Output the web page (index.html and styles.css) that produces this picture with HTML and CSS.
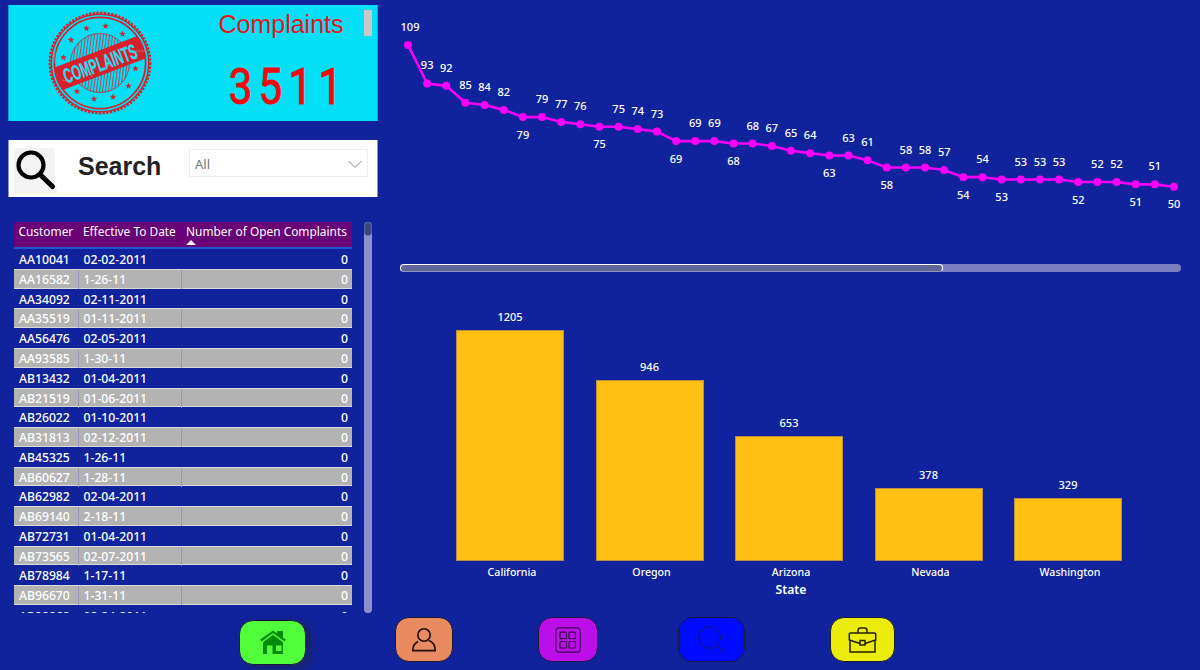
FILE: index.html
```html
<!DOCTYPE html>
<html lang="en">
<head>
<meta charset="utf-8">
<title>Complaints</title>
<link rel="stylesheet" href="styles.css">
</head>
<body>
<div class="page">
  <div class="content">
    <aside class="left">
      <section class="kpi">
        <svg class="stamp" width="106" height="106" viewBox="-53 -53 106 106">
          <circle class="stamp-teeth" r="50.3"/>
          <circle class="stamp-edge" r="48.7"/>
          <circle class="stamp-ring" r="45.6"/>
          <clipPath id="disc"><circle r="29.5"/></clipPath>
          <g id="hatch" clip-path="url(#disc)"></g>
          <circle class="stamp-inner" r="29.5"/>
          <g id="stars"></g>
          <clipPath id="seal"><circle r="46"/></clipPath>
          <g clip-path="url(#seal)"><rect class="stamp-band" x="-50" y="-12" width="100" height="24" transform="rotate(-21)"/></g>
          <text class="stamp-text" transform="rotate(-20)" x="-38.500" y="8" textLength="77" lengthAdjust="spacingAndGlyphs">COMPLAINTS</text>
          <path class="stamp-wear" d="M36-12h9M-45 0v-13M-42-22l7-11M-24 38l8 3M-28 31l4 2M5 2l6 1M-3-29h5M-38 17l8 2M27 19l5-2M-12 6l4 8"/>
        </svg>
        <div class="kpi-body">
          <div class="kpi-title">Complaints</div>
          <div class="kpi-value">3511</div>
        </div>
        <div class="kpi-scroll"></div>
      </section>
      <section class="search">
        <svg class="search-icon" width="44" height="45" viewBox="0 0 44 45">
          <path fill="#f3f3f3" d="M0 0h41v38h2v7H0z"/>
          <circle cx="17" cy="17" r="12.500" fill="none" stroke="#000" stroke-width="4.200"/>
          <path d="M26 26.500l12.500 12" stroke="#000" stroke-width="5" stroke-linecap="round"/>
        </svg>
        <div class="search-label">Search</div>
        <div class="dropdown"><span>All</span>
          <svg width="14" height="9" viewBox="0 0 14 9"><path d="M.5 1L7 7.500 13.500 1" fill="none" stroke="#70838f"/></svg>
        </div>
      </section>
      <section class="table-area">
        <div class="table-clip">
          <div class="row head"><div>Customer</div><div>Effective To Date</div><div class="sorted">Number of Open Complaints</div></div>
          <div id="rows"></div>
        </div>
        <div class="vscroll"><div class="vthumb"></div></div>
      </section>
    </aside>
    <main class="right">
      <svg id="line" class="line-chart" width="810" height="259" viewBox="390 5 810 259"></svg>
      <div class="hscroll"><div class="hthumb"></div></div>
      <div class="bars">
        <div class="col"><span>1205</span><div class="bar" style="height:231px"></div></div>
        <div class="col"><span>946</span><div class="bar" style="height:181.500px"></div></div>
        <div class="col"><span>653</span><div class="bar" style="height:125.500px"></div></div>
        <div class="col"><span>378</span><div class="bar" style="height:73px"></div></div>
        <div class="col"><span>329</span><div class="bar" style="height:63.500px"></div></div>
      </div>
      <div class="axis"><span>California</span><span>Oregon</span><span>Arizona</span><span>Nevada</span><span>Washington</span></div>
      <div class="axis-title">State</div>
    </main>
  </div>
  <nav class="nav">
    <div class="btn home"><svg width="26" height="25" viewBox="0 0 26 25">
      <path fill="#008a0b" d="M3 12L13 4.500 23 12v12H3z"/>
      <path fill="#008a0b" d="M17 1h6v7l-6-4z"/>
      <path d="M.8 10.500L13 1.800 25.200 10.500" fill="none" stroke="#008a0b" stroke-width="2.200"/>
      <path d="M2.500 12L13 4.500 23.500 12" fill="none" stroke="#50ff3a" stroke-width=".8"/>
      <path fill="#50ff3a" d="M7 15.500h5.500V24.500H7zM16 15.500h5.500v5.500H16z"/>
    </svg></div>
    <div class="btn user"><svg width="24" height="24" viewBox="0 0 24 24" fill="none" stroke="#1c0d08" stroke-width="1.600">
      <circle cx="12" cy="7" r="6.200"/><path d="M6 13.500C2.500 15.200.8 18.500.8 22.600h22.400c0-5-2-8.500-6.500-10"/>
    </svg></div>
    <div class="btn grid"><svg width="26" height="26" viewBox="0 0 26 26" fill="none" stroke="#3c0450" stroke-width="1.200">
      <rect x=".8" y=".8" width="24.400" height="24.400" rx="3"/>
      <rect x="5" y="5.200" width="6.500" height="6.500" rx="1"/><rect x="14" y="5.200" width="6.500" height="6.500" rx="1"/>
      <rect x="5" y="14.500" width="6.500" height="6.500" rx="1"/><rect x="14" y="14.500" width="6.500" height="6.500" rx="1"/>
    </svg></div>
    <div class="btn find"><svg width="28" height="28" viewBox="0 0 28 28" fill="none" stroke="#1a1a3a" stroke-width="1">
      <circle cx="11.500" cy="11.500" r="10.800" stroke-dasharray="3 .6"/><path d="M19 19.500l8 7.800"/>
    </svg></div>
    <div class="btn work"><svg width="29" height="26" viewBox="0 0 28 26" fill="none" stroke="#1f1f00" stroke-width="1.500">
      <path d="M9.500 6V3.500Q9.500 1 12 1h4q2.500 0 2.500 2.500V6"/>
      <path d="M11.500 16.500L.8 13V7q0-1 1-1h24.400q1 0 1 1v6l-10.700 3.500"/><path d="M1.500 13.500V25h25V13.500"/>
      <rect x="11.500" y="13.500" width="5" height="4.500"/>
    </svg></div>
  </nav>
</div>
<script src="script.js"></script>
</body>
</html>
```
FILE: styles.css
```css
* { box-sizing: border-box; }
body { margin: 0; background: #11239c; color: #fff; font-family: "Noto Sans", "Open Sans", sans-serif; }
.page { width: 1200px; height: 670px; overflow: hidden; padding-top: 5px; }
.content { display: flex; height: 608px; }
.left { width: 390px; padding-left: 8px; }
.right { width: 810px; }

.kpi { display: flex; width: 370px; height: 116px; background: #03dff5; border: 1px solid #1a9fdd; border-top: 0; border-bottom: 0; }
.stamp { margin: 5px 0 0 38px; }
.stamp circle { fill: none; stroke: #d81f2c; }
.stamp .stamp-teeth { stroke-width: 2.200; stroke-dasharray: 2.300 1.400; }
.stamp .stamp-edge { stroke-width: 1.500; }
.stamp .stamp-ring { stroke-width: 1.700; }
.stamp .stamp-inner { stroke-width: .8; }
.stamp-band, .star { fill: #d81f2c; }
.hatch { stroke: #b34858; stroke-width: 1; }
.stamp-text { font: bold 21px "Liberation Sans", Arial, sans-serif; fill: #2bdcee; stroke: #2bdcee; stroke-width: .4; }
.stamp-wear { stroke: #b697a2; stroke-width: .9; fill: none; opacity: .6; }
.kpi-body { width: 150px; margin-left: 61px; color: #e0181f; text-align: center; }
.kpi-title { margin-left: -16px; font: 25px/30px "Liberation Sans", Arial, sans-serif; padding-top: 4px; }
.kpi-value { margin: 16px 0 0 -1px; font: 400 50px/64px Roboto, sans-serif; letter-spacing: 7.500px; color: #f4080b; -webkit-text-stroke: 1px #f4080b; transform: scaleX(.84); }
.kpi-scroll { width: 8px; height: 26px; margin: 5px 0 0 0; background: #c8c8c8; }

.search { display: flex; width: 370px; height: 57px; margin-top: 19px; background: #fff; border: 1px solid #8c94cf; border-width: 0 1px; color: #222; }
.search-icon { margin: 8px 0 0 5px; }
.search-label { width: 111px; margin-left: 20px; font: bold 25px/52px "Liberation Sans", Arial, sans-serif; }
.dropdown { display: flex; justify-content: space-between; align-items: center; width: 179px; height: 28px; margin-top: 9px; padding: 2px 5px 0 5px; border: 1px solid #ededed; color: #69757f; font-size: 13px; }

.table-area { display: flex; margin-top: 25px; padding-left: 6px; height: 391px; }
.table-clip { width: 338px; height: 391px; overflow: hidden; font-size: 12.200px; font-weight: 500; }
.row { display: grid; grid-template-columns: 64.500px 103px 170.500px; height: 19.770px; line-height: 21px; white-space: nowrap; }
.row > div { padding: 0 5px; }
.row > div:last-child { padding-right: 4px; text-align: right; border-right: 0; }
.row > div { border-right: 1px solid transparent; }
.row.alt { background: #b3b3b3; border-top: 1px solid #dadada; border-bottom: 1px solid #dadada; line-height: 19px; }
.row.alt > div:not(:last-child) { border-right-color: #9699b8; }
.row:last-child { padding-top: 1px; height: 24px; }
.row.head { height: 27.200px; padding-top: 0; line-height: 18.500px; font-size: 11.900px; font-weight: 400; background: #690078; border-bottom: 2px solid #2455cf; }
.row.head > div { padding-left: 4.500px; }
.row.head .sorted { position: relative; text-align: left; }
.sorted::after { content: ""; position: absolute; left: 4px; top: 18px; border: 5px solid transparent; border-top: 0; border-bottom: 5px solid #fff; }
.vscroll { width: 8px; height: 391px; margin-left: 12px; border-radius: 4px; background: #8c91ce; }
.vthumb { height: 14px; border-radius: 4px; background: #3b4580; border: 1px solid #5760a0; }

.line-chart { display: block; }
.line-chart polyline { fill: none; stroke: #ff00f6; stroke-width: 2.600; stroke-linejoin: round; }
.line-chart circle { fill: #ff00f6; }
.line-chart text { fill: #fff; font-size: 11px; font-weight: 500; text-anchor: middle; }
.hscroll { width: 781px; height: 8px; margin: 0 0 0 10px; border-radius: 4px; background: #7a80bf; }
.hthumb { width: 543px; height: 8px; border: 1px solid #fff; border-bottom-color: #8d92b8; border-radius: 4px; background: #5f6596; }
.bars { display: flex; align-items: flex-end; gap: 31.500px; height: 289px; padding-left: 66px; }
.col { width: 108px; text-align: center; font-size: 11px; font-weight: 500; line-height: 16px; }
.col span { display: block; margin-bottom: 5px; }
.bar { background: #ffc011; border: 1px solid #b58c48; }
.axis { display: flex; gap: 31.500px; padding: 3px 0 0 68px; font-size: 10.600px; font-weight: 500; line-height: 16px; text-align: center; }
.axis span { width: 108px; }
.axis-title { width: 120px; margin: 1px 0 0 341px; font-size: 12.200px; font-weight: 600; line-height: 17px; text-align: center; }

.nav { display: flex; height: 57px; padding: 4px 0 0 239px; }
.btn { display: flex; align-items: center; justify-content: center; height: 45px; border: 1px solid #1a1a38; border-radius: 14px; }
.home { width: 67px; margin-top: 3px; background: #50ff3a; box-shadow: 6px 3px 8px rgba(30, 35, 70, .600); }
.user { width: 58px; margin-left: 89px; background: #ea8a60; }
.grid { width: 60px; margin-left: 85px; background: #bc0ee8; }
.find { width: 67px; margin-left: 80px; background: #000cff; }
.work { width: 65px; margin-left: 85px; background: #ebed08; }
```
FILE: script.js
```javascript
const NS = "http://www.w3.org/2000/svg";
function add(parent, tag, attrs, text) {
  const el = document.createElementNS(NS, tag);
  for (const k in attrs) el.setAttribute(k, attrs[k]);
  if (text !== undefined) el.textContent = text;
  parent.appendChild(el);
}

// Line series; indexes in "below" carry their label under the marker.
const values = [109,93,92,85,84,82,79,79,77,76,75,75,74,73,69,69,69,68,68,67,65,64,63,63,61,58,58,58,57,54,54,53,53,53,53,52,52,52,51,51,50];
const below = new Set([6,10,14,17,22,25,29,31,35,38,40]);
const line = document.getElementById("line");
const pts = values.map((v, i) => [408 + i * 19.15, 45 + (109 - v) * 2.403]);
add(line, "polyline", { points: pts.map(p => p.join(",")).join(" ") });
pts.forEach(([x, y], i) => {
  add(line, "circle", { cx: x, cy: y, r: 4 });
  add(line, "text", { x: i === 0 ? 410 : x, y: below.has(i) ? y + 21.7 : y - 14 }, values[i]);
});

// Stamp decoration: hatching and stars.
const hatch = document.getElementById("hatch");
for (let x = -42; x < 44; x += 3) add(hatch, "line", { class: "hatch", x1: x - 4, y1: 32, x2: x + 4, y2: -32 });
const stars = document.getElementById("stars");
[[-36.500,-5.500],[-29,-23],[-13.500,-34.500],[5.500,-37],[22.500,-29],[-23,28.500],[-6,36],[13,34],[28.500,23],[35.500,5.500]].forEach(([x, y]) => {
  let d = [];
  for (let k = 0; k < 10; k++) {
    const r = k % 2 ? 1.4 : 3.5, a = k * Math.PI / 5 - Math.PI / 2;
    d.push((x + r * Math.cos(a)).toFixed(2) + "," + (y + r * Math.sin(a)).toFixed(2));
  }
  add(stars, "polygon", { class: "star", points: d.join(" ") });
});

const data = [
  ["AA10041","02-02-2011"],["AA16582","1-26-11"],["AA34092","02-11-2011"],["AA35519","01-11-2011"],
  ["AA56476","02-05-2011"],["AA93585","1-30-11"],["AB13432","01-04-2011"],["AB21519","01-06-2011"],
  ["AB26022","01-10-2011"],["AB31813","02-12-2011"],["AB45325","1-26-11"],["AB60627","1-28-11"],
  ["AB62982","02-04-2011"],["AB69140","2-18-11"],["AB72731","01-04-2011"],["AB73565","02-07-2011"],
  ["AB78984","1-17-11"],["AB96670","1-31-11"],["AB98868","02-24-2011"]
];
document.getElementById("rows").innerHTML = data.map(([c, d], i) =>
  `<div class="row${i % 2 ? " alt" : ""}"><div>${c}</div><div>${d}</div><div>0</div></div>`).join("");
```
